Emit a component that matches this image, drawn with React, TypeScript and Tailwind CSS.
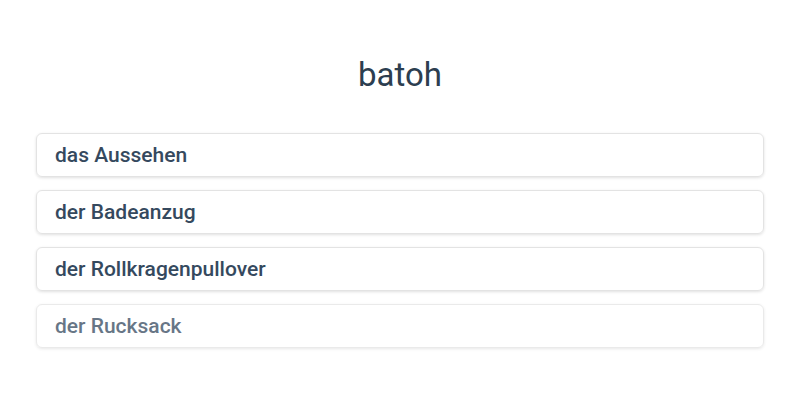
export default function App() {
  const items = ["das Aussehen", "der Badeanzug", "der Rollkragenpullover", "der Rucksack"];
  return (
    <div className="w-[800px] h-[400px] bg-white text-[#2c3e50]" style={{ fontFamily: "Roboto, sans-serif" }}>
      <div className="pt-[54px] text-center text-[33px] leading-[42px] text-[#2c3e50]">batoh</div>
      <div className="mt-[37px] px-[36px] flex flex-col gap-[13px]">
        {items.map((t, i) => (
          <div
            key={t}
            className={`h-[44px] rounded-[6px] border border-[#e3e3e3] shadow-[0_1px_3px_rgba(0,0,0,0.12)] flex items-center pl-[18px] pt-[2px] text-[21px] font-medium text-[#35495e] ${i === 3 ? "opacity-75" : ""}`}
          >
            {t}
          </div>
        ))}
      </div>
    </div>
  );
}
